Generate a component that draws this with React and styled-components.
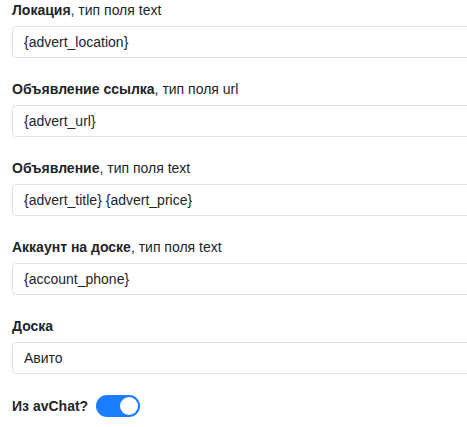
import React from "react";
import styled, { createGlobalStyle } from "styled-components";

const Global = createGlobalStyle`
  html, body { margin: 0; padding: 0; background: #fff; overflow: hidden; }
  body { font-family: "Liberation Sans", Arial, sans-serif; color: #212529; }
`;

const Page = styled.div`
  width: 480px;
  padding: 0 0 0 12px;
  box-sizing: border-box;
`;

const Group = styled.div`
  margin-bottom: 21px;
`;

const Label = styled.div`
  font-size: 14px;
  line-height: 21px;
  margin-bottom: 5px;
  b { font-weight: 700; }
`;

const Input = styled.div`
  box-sizing: border-box;
  width: 470px;
  height: 32px;
  border: 1px solid #dee2e6;
  border-radius: 4px;
  padding: 0 11px;
  display: flex;
  align-items: center;
  font-size: 14px;
  color: #212529;
`;

const SwitchRow = styled.div`
  display: flex;
  align-items: center;
  gap: 8px;
  height: 22px;
  font-size: 14px;
  font-weight: 700;
`;

const Switch = styled.div`
  box-sizing: border-box;
  width: 44px;
  height: 22px;
  border-radius: 11px;
  background: ${(p) => (p.$on ? "#1a7cff" : "#ccc")};
  display: flex;
  align-items: center;
  justify-content: ${(p) => (p.$on ? "flex-end" : "flex-start")};
  padding: 0 2px;
`;

const Knob = styled.div`
  width: 18px;
  height: 18px;
  border-radius: 50%;
  background: #fff;
`;

const fields = [
  { name: "Локация", type: ", тип поля text", value: "{advert_location}" },
  { name: "Объявление ссылка", type: ", тип поля url", value: "{advert_url}" },
  { name: "Объявление", type: ", тип поля text", value: "{advert_title} {advert_price}" },
  { name: "Аккаунт на доске", type: ", тип поля text", value: "{account_phone}" },
  { name: "Доска", type: "", value: "Авито" },
];

export default function App() {
  return (
    <Page>
      <Global />
      {fields.map((f) => (
        <Group key={f.name}>
          <Label>
            <b>{f.name}</b>
            {f.type}
          </Label>
          <Input>{f.value}</Input>
        </Group>
      ))}
      <SwitchRow>
        Из avChat?
        <Switch $on>
          <Knob />
        </Switch>
      </SwitchRow>
    </Page>
  );
}
